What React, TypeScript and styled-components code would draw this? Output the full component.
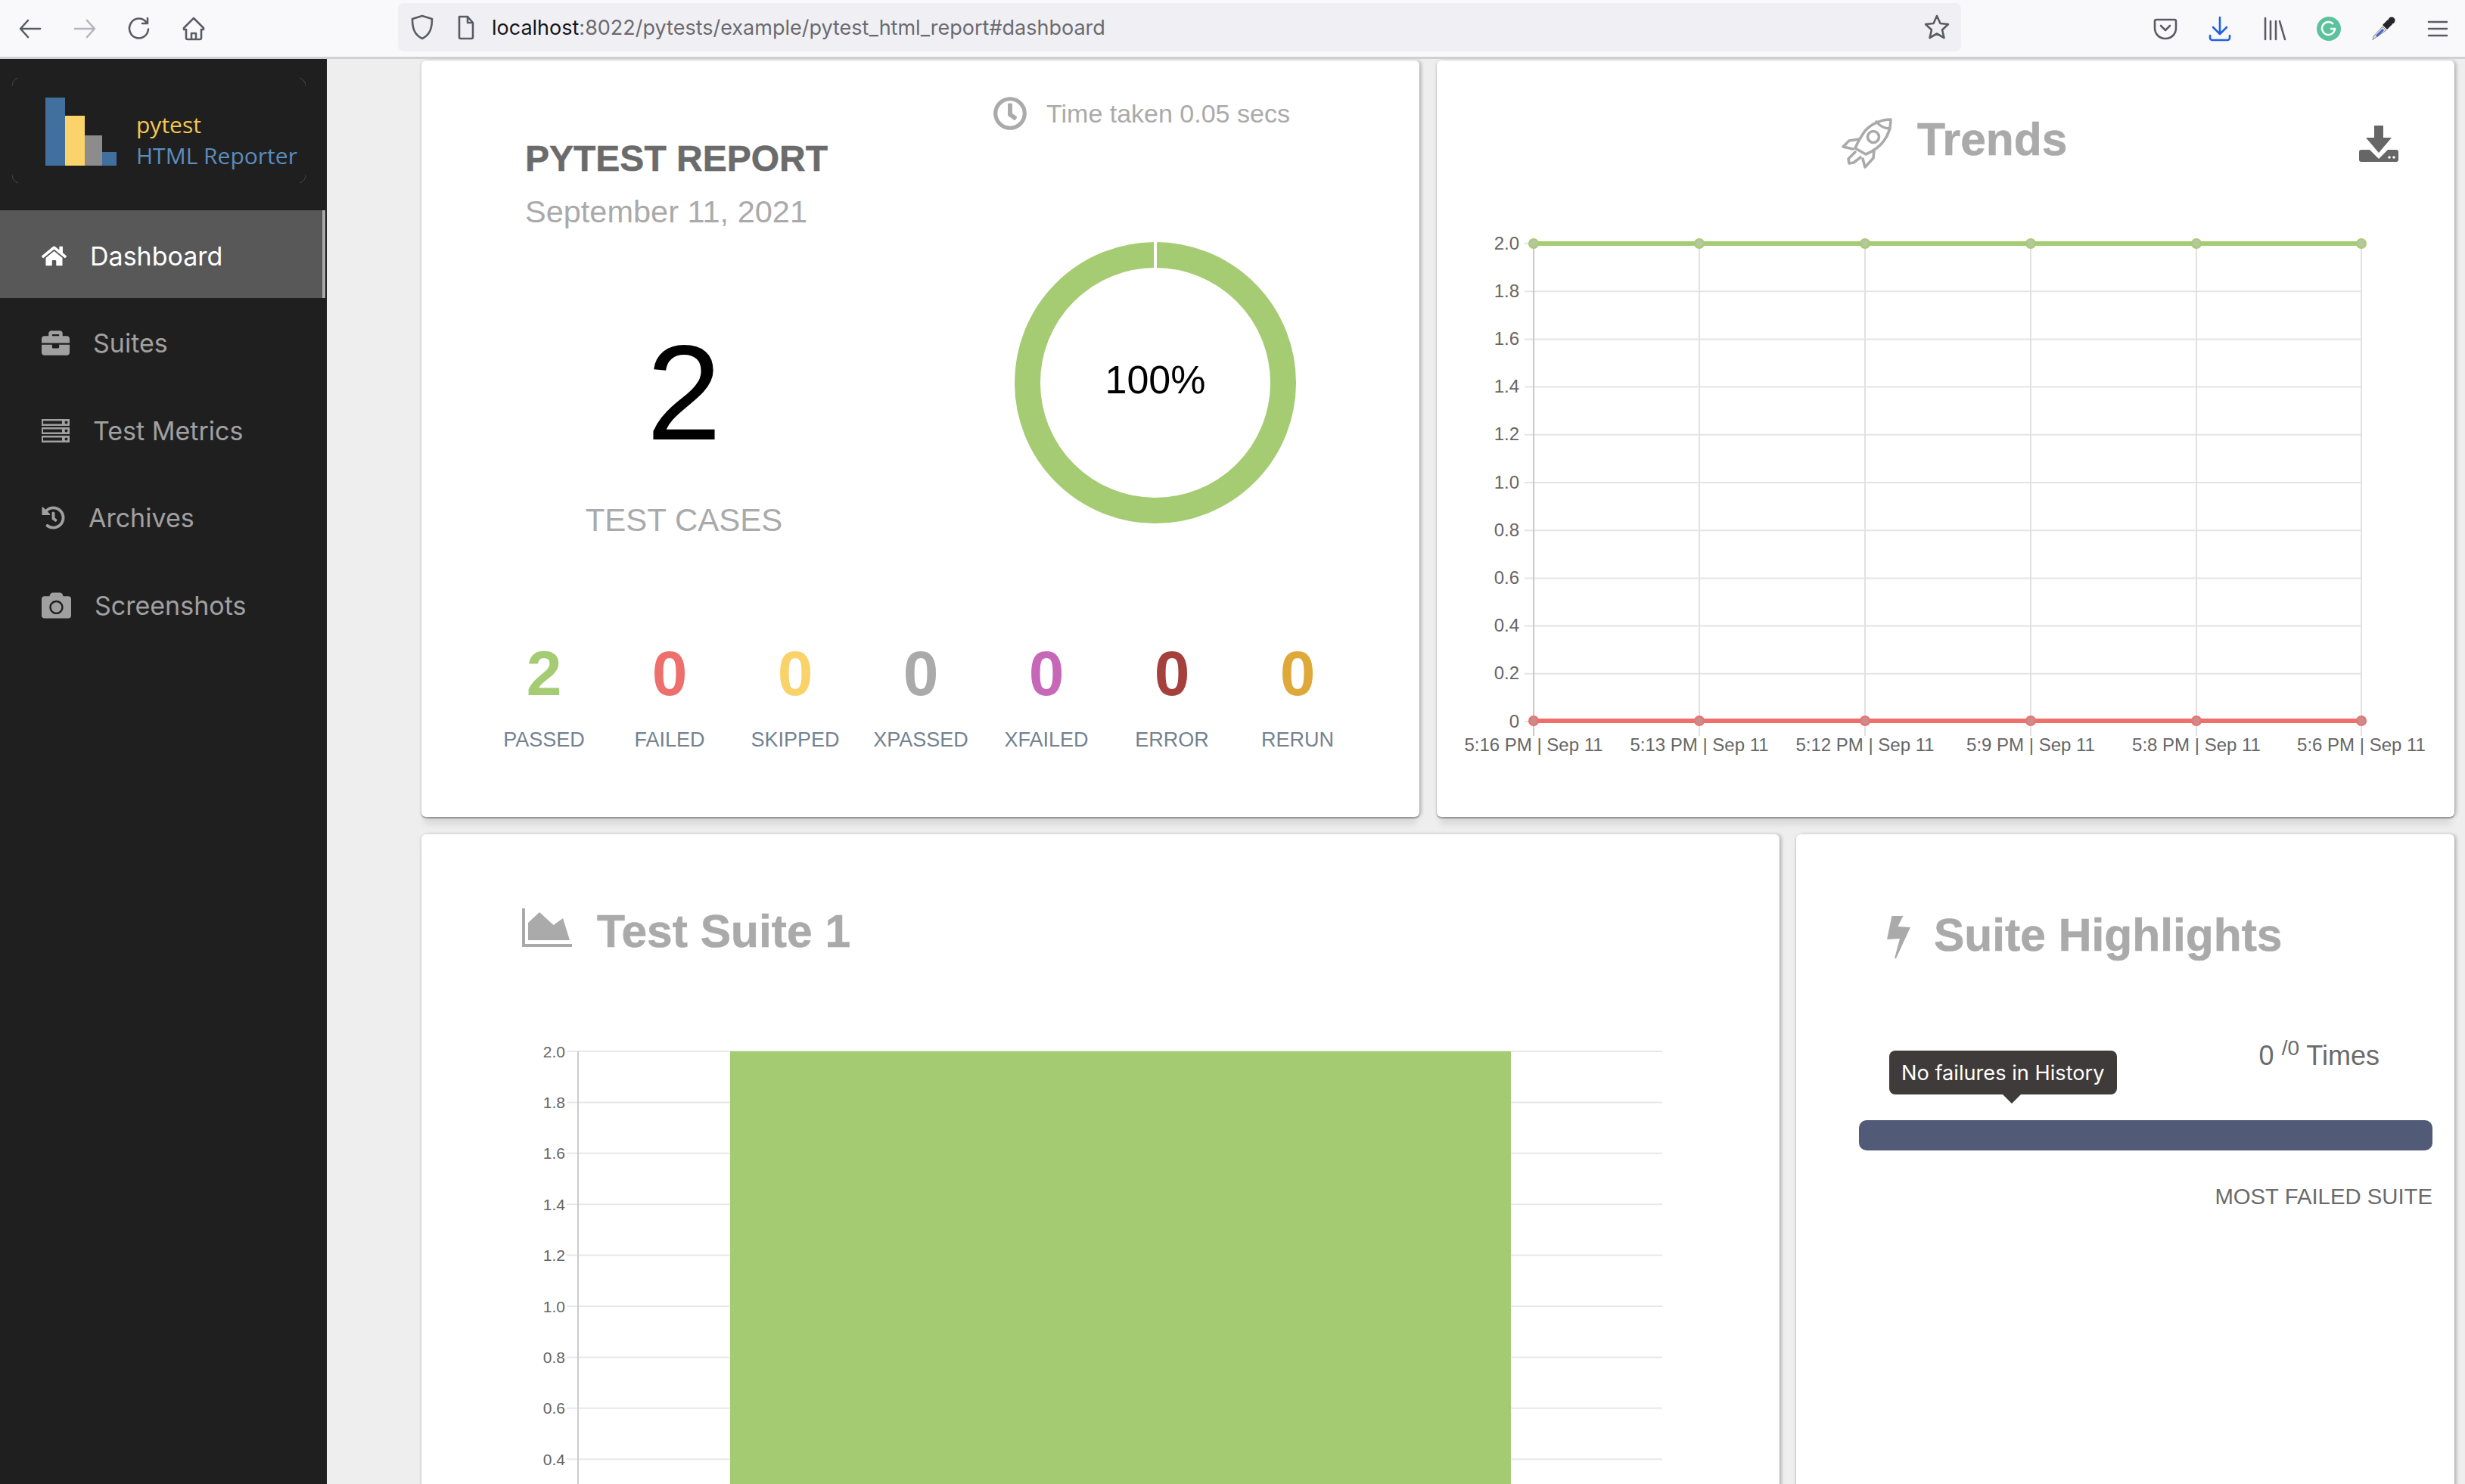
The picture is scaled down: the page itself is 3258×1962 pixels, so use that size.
import styled, {createGlobalStyle} from "styled-components";
import {FaBriefcase, FaCamera, FaHistory, FaHome, FaRegClock} from "react-icons/fa";

const HELVETICA = `"Liberation Sans", Arial, sans-serif`;
const UI_FONT = `Inter, "Liberation Sans", sans-serif`;

const Y_TICKS = ["2.0", "1.8", "1.6", "1.4", "1.2", "1.0", "0.8", "0.6", "0.4", "0.2", "0"];
const BAR_TICKS = ["2.0", "1.8", "1.6", "1.4", "1.2", "1.0", "0.8", "0.6", "0.4"];
const X_TICKS = ["5:16 PM | Sep 11", "5:13 PM | Sep 11", "5:12 PM | Sep 11", "5:9 PM | Sep 11", "5:8 PM | Sep 11", "5:6 PM | Sep 11"];

const STATS = [
  {label: "PASSED", value: 2, color: "#a5cc72"},
  {label: "FAILED", value: 0, color: "#ee706c"},
  {label: "SKIPPED", value: 0, color: "#fad26a"},
  {label: "XPASSED", value: 0, color: "#aaaaaa"},
  {label: "XFAILED", value: 0, color: "#c667b8"},
  {label: "ERROR", value: 0, color: "#a6403d"},
  {label: "RERUN", value: 0, color: "#dfa93a"},
];

const ServerIcon = () => (
  <svg width="37" height="31" viewBox="0 0 37 31" fill="currentColor">
    <path fillRule="evenodd" d="M0 0h37v9H0zM2 2.500v4h25v-4zM0 11h37v9H0zM2 13.500v4h25v-4zM0 22h37v9H0zM2 24.500v4h25v-4z"/>
    <circle cx="32.500" cy="4.500" r="2" fill="#201f20"/>
    <circle cx="32.500" cy="15.500" r="2" fill="#201f20"/>
    <circle cx="32.500" cy="26.500" r="2" fill="#201f20"/>
  </svg>
);

const AreaChartIcon = () => (
  <svg width="66" height="51" viewBox="0 0 66 51" fill="#aaaaaa">
    <path d="M0 0h4v47h62v4H0z"/>
    <path d="M8 19 23 5l18.500 17L54 13l9 29H8z"/>
  </svg>
);

const BoltIcon = () => (
  <svg width="31" height="57" viewBox="0 0 31 57" fill="#aaaaaa">
    <path d="M6.400 0h15L14.400 14 31 15 12 56h-2l7-26-17 1z"/>
  </svg>
);

const RocketIcon = () => (
  <svg width="67" height="67" viewBox="0 0 67 67" fill="none" stroke="#aaaaaa" strokeWidth="3.600" strokeLinejoin="round" strokeLinecap="round">
    <path d="M65 2C52 2 39 8 31 17 24 27 20 35 18 40l14 8c7-3 18-9 24-18 6-8 9-18 9-28z"/>
    <path d="M46 5c4 5 11 9 18 9"/>
    <circle cx="42" cy="25" r="7.500"/>
    <path d="M23 28 10 30l-8 8 13 3M43 42l-1 11-11 12-3-11"/>
    <path d="m18 45-9 9 1 6 6-1 9-7"/>
  </svg>
);

const DownloadIcon = () => (
  <svg width="52" height="48" viewBox="0 0 52 48">
    <rect x="0" y="32" width="52" height="16" rx="3" fill="#666666"/>
    <path d="M8 26h36L26 44z" fill="#ffffff"/>
    <path d="M20 0h12v16h11L26 36 9 16h11z" fill="#666666"/>
    <circle cx="40" cy="42" r="1.800" fill="#ffffff"/>
    <circle cx="46" cy="42" r="1.800" fill="#ffffff"/>
  </svg>
);

const ToolIcon = ({children, color = "#5b5b66", fill = "none"}: {children: React.ReactNode; color?: string; fill?: string}) => (
  <svg width="36" height="36" viewBox="0 0 36 36" fill={fill} stroke={color} strokeWidth="2.600" strokeLinecap="round" strokeLinejoin="round">
    {children}
  </svg>
);

const Logo = () => (
  <svg width="94" height="90" viewBox="0 0 94 90">
    <rect x="0" y="0" width="26" height="90" fill="#41709f"/>
    <rect x="26" y="24" width="26" height="66" fill="#fad46a"/>
    <rect x="52" y="50" width="23" height="40" fill="#8c8c8c"/>
    <rect x="75" y="72" width="19" height="18" fill="#41709f"/>
  </svg>
);

const TrendsChart = () => {
  const xs = [2027, 2246, 2465, 2684, 2903, 3121];
  return (
    <ChartSvg width="1345" height="740" viewBox="1899 270 1345 740">
      {Y_TICKS.map((tick, i) => {
        const y = 322 + i * 63.2;
        return (
          <g key={tick}>
            <line x1="2015" x2="3121" y1={y} y2={y} stroke="#e4e4e4" strokeWidth="2"/>
            <AxisText x="2008" y={y - 1} textAnchor="end" dominantBaseline="central">{tick}</AxisText>
          </g>
        );
      })}
      {xs.map((x, i) => (
        <g key={x}>
          <line x1={x} x2={x} y1="322" y2="973" stroke={i === 0 ? "#c8c8c8" : "#e2e2e2"} strokeWidth="2"/>
          <AxisText x={x} y="984" textAnchor="middle" dominantBaseline="central">{X_TICKS[i]}</AxisText>
        </g>
      ))}
      <line x1="2027" x2="3121" y1="322" y2="322" stroke="#a5cc72" strokeWidth="6"/>
      <line x1="2027" x2="3121" y1="953" y2="953" stroke="#ee706c" strokeWidth="6"/>
      {xs.map((x) => (
        <g key={x}>
          <circle cx={x} cy="322" r="6" fill="#b5c79c" stroke="#a5cc72" strokeWidth="2"/>
          <circle cx={x} cy="953" r="6" fill="#c98b8b" stroke="#ee706c" strokeWidth="2"/>
        </g>
      ))}
    </ChartSvg>
  );
};

const SuiteChart = () => (
  <ChartSvg width="1795" height="640" viewBox="557 1340 1795 640">
    {BAR_TICKS.map((tick, i) => {
      const y = 1392 + i * 67.4;
      return (
        <g key={tick}>
          <line x1="749" x2="2197" y1={y} y2={y} stroke="#e8e8e8" strokeWidth="2"/>
          <BarAxisText x="747" y={y} textAnchor="end" dominantBaseline="central">{tick}</BarAxisText>
        </g>
      );
    })}
    <line x1="764" x2="764" y1="1392" y2="1980" stroke="#cccccc" strokeWidth="2"/>
    <rect x="965" y="1392" width="1032" height="588" fill="#a4cb72"/>
  </ChartSvg>
);

export default function App() {
  return (
    <>
      <GlobalStyle/>
      <Page>
        <Toolbar>
          <NavIcons>
            <ToolSlot><ToolIcon><path d="M31 18H6M15 7 5 18l10 11"/></ToolIcon></ToolSlot>
            <ToolSlot><ToolIcon color="#b4b4ba"><path d="M5 18h25M21 7l10 11-10 11"/></ToolIcon></ToolSlot>
            <ToolSlot><ToolIcon><path d="M27 9a12.500 13 0 1 0 3 9.500M29 4v7h-7"/></ToolIcon></ToolSlot>
            <ToolSlot><ToolIcon><path d="m18 4 13 13v2h-3v11a2 2 0 0 1-2 2H10a2 2 0 0 1-2-2V19H5v-2zM15 32v-8h6v8"/></ToolIcon></ToolSlot>
          </NavIcons>
          <AddressBar>
            <ToolIcon><path d="M18 3 31 7c0 13-3 21-13 26C8 28 5 20 5 7z"/></ToolIcon>
            <ToolIcon><path d="M9 4h11l7 8v19a2 2 0 0 1-2 2H11a2 2 0 0 1-2-2zM20 4v8h7"/></ToolIcon>
            <Url><b>localhost</b>:8022/pytests/example/pytest_html_report#dashboard</Url>
            <StarSlot>
              <ToolIcon><path d="m18 3 4.500 10 10.500 1-8 7.500L27.500 32 18 26.500 8.500 32 11 21.500 3 14l10.500-1z"/></ToolIcon>
            </StarSlot>
          </AddressBar>
          <ToolIcons>
            <ToolSlot><ToolIcon><path d="M6 6h24a2 2 0 0 1 2 2v9c0 8-6 14-14 14S4 25 4 17V8a2 2 0 0 1 2-2zM12 14l6 6 6-6"/></ToolIcon></ToolSlot>
            <ToolSlot><ToolIcon color="#1f62e0"><path d="M18 3v22M9 16l9 9 9-9M5 27v3a3 3 0 0 0 3 3h20a3 3 0 0 0 3-3v-3"/></ToolIcon></ToolSlot>
            <ToolSlot><ToolIcon><path d="M6 4v28M13 8v24M20 8v24M25 8l7 24"/></ToolIcon></ToolSlot>
            <ToolSlot>
              <svg width="36" height="36" viewBox="0 0 36 36">
                <circle cx="18" cy="18" r="16" fill="#5bc29d"/>
                <path d="M24 12a8.500 8.500 0 1 0 2 6h-6" fill="none" stroke="#ffffff" strokeWidth="2.400"/>
              </svg>
            </ToolSlot>
            <ToolSlot>
              <svg width="36" height="36" viewBox="0 0 36 36">
                <path d="M6 31 4 33l1-5L17 15l5 5z" fill="#d9dce2" stroke="#8c8c90" strokeWidth="1"/>
                <path d="m8 27 9-9 2 2-9 9z" fill="#3b66c9"/>
                <path d="m17 13 7-7 6 6-7 7z" fill="#26262a"/>
                <circle cx="29" cy="7" r="4.500" fill="#26262a"/>
              </svg>
            </ToolSlot>
            <ToolSlot><ToolIcon><path d="M6 9h24M6 18h24M6 27h24"/></ToolIcon></ToolSlot>
          </ToolIcons>
        </Toolbar>
        <Body>
          <Sidebar>
            <Brand>
              <BrandFrame width="388" height="141" viewBox="0 0 388 141" fill="none" stroke="#4a4a4a" strokeWidth="1">
                <path d="M0 12A12 12 0 0 1 8 1M380 1a12 12 0 0 1 8 11M388 129a12 12 0 0 1-8 11M8 140a12 12 0 0 1-8-11"/>
              </BrandFrame>
              <Logo/>
              <BrandText>
                <BrandPytest>pytest</BrandPytest>
                <BrandReporter>HTML Reporter</BrandReporter>
              </BrandText>
            </Brand>
            <NavItem $active><FaHome size={33}/>Dashboard</NavItem>
            <NavItem><FaBriefcase size={37}/>Suites</NavItem>
            <NavItem><ServerIcon/>Test Metrics</NavItem>
            <NavItem><FaHistory size={31}/>Archives</NavItem>
            <NavItem><FaCamera size={39}/>Screenshots</NavItem>
          </Sidebar>
          <Main>
            <TopRow>
              <Card>
                <Summary>
                  <SummaryLeft>
                    <ReportTitle>PYTEST REPORT</ReportTitle>
                    <ReportDate>September 11, 2021</ReportDate>
                    <BigCount>2</BigCount>
                    <CountLabel>TEST CASES</CountLabel>
                  </SummaryLeft>
                  <SummaryRight>
                    <TimeTaken><FaRegClock size={44}/>Time taken 0.05 secs</TimeTaken>
                    <Doughnut width="372" height="372" viewBox="0 0 372 372">
                      <circle cx="186" cy="186" r="169" fill="none" stroke="#a5cc72" strokeWidth="34"/>
                      <rect x="184" y="0" width="4" height="36" fill="#ffffff"/>
                      <DoughnutText x="186" y="182" textAnchor="middle" dominantBaseline="central">100%</DoughnutText>
                    </Doughnut>
                  </SummaryRight>
                </Summary>
                <Stats>
                  {STATS.map((stat) => (
                    <Stat key={stat.label}>
                      <StatValue $color={stat.color}>{stat.value}</StatValue>
                      <StatLabel>{stat.label}</StatLabel>
                    </Stat>
                  ))}
                </Stats>
              </Card>
              <Card>
                <TrendsHeader>
                  <RocketIcon/>
                  <CardTitle>Trends</CardTitle>
                  <DownloadSlot><DownloadIcon/></DownloadSlot>
                </TrendsHeader>
                <TrendsChart/>
              </Card>
            </TopRow>
            <BottomRow>
              <Card>
                <SuiteHeader>
                  <AreaChartIcon/>
                  <CardTitle>Test Suite 1</CardTitle>
                </SuiteHeader>
                <SuiteChart/>
              </Card>
              <Card>
                <HighlightsHeader>
                  <BoltIcon/>
                  <CardTitle>Suite Highlights</CardTitle>
                </HighlightsHeader>
                <Highlights>
                  <Tooltip>No failures in History</Tooltip>
                  <Times>0 <sup>/0</sup> Times</Times>
                  <ProgressBar/>
                  <MostFailed>MOST FAILED SUITE</MostFailed>
                </Highlights>
              </Card>
            </BottomRow>
          </Main>
        </Body>
      </Page>
    </>
  );
}

const GlobalStyle = createGlobalStyle`
  html, body {
    margin: 0;
    padding: 0;
    background: #eeeeee;
    overflow: hidden;
  }

  * {
    box-sizing: border-box;
  }
`;

const Page = styled.div`
  width: 3258px;
  height: 1962px;
  display: flex;
  flex-direction: column;
  font-family: ${HELVETICA};
`;

const Toolbar = styled.header`
  height: 78px;
  flex: none;
  display: flex;
  align-items: flex-start;
  padding: 0 0 0 4px;
  background: #f9f9fb;
  border-bottom: 3px solid #d0d0d2;
`;

const NavIcons = styled.div`
  display: flex;
  height: 75px;
  align-items: center;
`;

const ToolIcons = styled(NavIcons)`
  margin-left: auto;
`;

const ToolSlot = styled.div`
  width: 72px;
  display: flex;
  justify-content: center;
`;

const AddressBar = styled.div`
  margin: 4px 0 0 234px;
  width: 2066px;
  height: 64px;
  display: flex;
  align-items: center;
  gap: 22px;
  padding: 0 0 0 14px;
  border-radius: 8px;
  background: #f0f0f4;
`;

const Url = styled.span`
  margin-left: -6px;
  font-family: ${UI_FONT};
  font-size: 27px;
  color: #6a6a70;
  white-space: nowrap;

  b {
    font-weight: 400;
    color: #15141a;
  }
`;

const StarSlot = styled.div`
  margin-left: auto;
  margin-right: 14px;
  display: flex;
`;

const Body = styled.div`
  flex: 1;
  display: flex;
  min-height: 0;
`;

const Sidebar = styled.aside`
  width: 432px;
  flex: none;
  background: #201f20;
`;

const Brand = styled.div`
  position: relative;
  height: 200px;
  display: flex;
  align-items: flex-start;
  gap: 26px;
  padding: 51px 0 0 60px;
`;

const BrandFrame = styled.svg`
  position: absolute;
  left: 16px;
  top: 24px;
`;

const BrandText = styled.div`
  margin-top: 15px;
  font-family: "Open Sans", sans-serif;
  font-size: 30px;
  line-height: 41px;
`;

const BrandPytest = styled.div`
  color: #f5c84f;
`;

const BrandReporter = styled.div`
  color: #5b8dbd;
`;

const NavItem = styled.div<{$active?: boolean}>`
  height: 115.500px;
  display: flex;
  align-items: center;
  gap: 31px;
  padding-left: 55px;
  padding-top: 5px;
  font-family: ${UI_FONT};
  font-size: 34px;
  color: ${({$active}) => ($active ? "#ffffff" : "#a0a0a0")};
  background: ${({$active}) => ($active ? "#585858" : "transparent")};
  border-right: ${({$active}) => ($active ? "4px solid #a8a8a8" : "none")};
  margin-right: ${({$active}) => ($active ? "2px" : "0")};
`;

const Main = styled.main`
  flex: 1;
  min-width: 0;
  height: 1884px;
  overflow: hidden;
  padding: 2px 14px 0 125px;
`;

const TopRow = styled.div`
  display: grid;
  grid-template-columns: 1319px 1345px;
  gap: 23px;
  height: 1000px;
  margin-bottom: 23px;
`;

const BottomRow = styled.div`
  display: grid;
  grid-template-columns: 1795px 870px;
  gap: 22px;
  height: 880px;
`;

const Card = styled.section`
  position: relative;
  background: #ffffff;
  border-radius: 6px;
  box-shadow: 0 2px 2px rgba(0, 0, 0, 0.28), 3px 0 4px rgba(0, 0, 0, 0.2), 0 14px 10px -4px rgba(0, 0, 0, 0.09), -2px 0 3px rgba(0, 0, 0, 0.05);
`;

const Summary = styled.div`
  display: grid;
  grid-template-columns: 647px 372px;
  padding-left: 137px;
`;

const SummaryLeft = styled.div`
  padding-top: 101px;
`;

const ReportTitle = styled.h1`
  margin: 0;
  font-size: 48px;
  line-height: 58px;
  font-weight: 700;
  color: #6b6b6b;
  -webkit-text-stroke: 0.5px #6b6b6b;
`;

const ReportDate = styled.div`
  margin-top: 17px;
  font-size: 41.500px;
  line-height: 48px;
  color: #aaaaaa;
`;

const BigCount = styled.div`
  width: 420px;
  margin-top: 131px;
  font-size: 178px;
  line-height: 170px;
  text-align: center;
  color: #000000;
`;

const CountLabel = styled.div`
  width: 420px;
  margin-top: 59px;
  font-size: 42px;
  line-height: 48px;
  text-align: center;
  color: #aaaaaa;
`;

const SummaryRight = styled.div`
  padding-top: 45px;
`;

const TimeTaken = styled.div`
  height: 50px;
  margin-left: -28px;
  display: flex;
  align-items: center;
  gap: 26px;
  font-size: 34px;
  color: #aaaaaa;
  white-space: nowrap;

  svg {
    stroke: #aaaaaa;
    stroke-width: 12px;
  }
`;

const Doughnut = styled.svg`
  display: block;
  margin-top: 145px;
`;

const DoughnutText = styled.text`
  font-family: ${HELVETICA};
  font-size: 52px;
  fill: #000000;
`;

const Stats = styled.div`
  display: grid;
  grid-template-columns: repeat(7, 166px);
  margin-top: 133px;
  padding-left: 79px;
`;

const Stat = styled.div`
  text-align: center;
`;

const StatValue = styled.div<{$color: string}>`
  font-size: 84px;
  line-height: 90px;
  font-weight: 700;
  color: ${({$color}) => $color};
`;

const StatLabel = styled.div`
  margin-top: 25px;
  font-size: 27px;
  line-height: 36px;
  color: #738290;
`;

const CardTitle = styled.h2`
  margin: 0;
  font-size: 60.500px;
  line-height: 60px;
  font-weight: 700;
  color: #aaaaaa;
  white-space: nowrap;
  -webkit-text-stroke: 0.6px #aaaaaa;
`;

const TrendsHeader = styled.div`
  height: 190px;
  display: flex;
  align-items: flex-start;
  gap: 33px;
  padding: 74px 74px 0 535px;

  > svg:first-child {
    margin-top: 2px;
  }
`;

const DownloadSlot = styled.div`
  margin: 12px 0 0 auto;
`;

const ChartSvg = styled.svg`
  display: block;
`;

const AxisText = styled.text`
  font-family: ${HELVETICA};
  font-size: 24px;
  fill: #666666;
`;

const BarAxisText = styled(AxisText)`
  font-size: 21px;
`;

const SuiteHeader = styled.div`
  height: 235px;
  display: flex;
  align-items: flex-start;
  gap: 33px;
  padding: 98px 0 0 133px;
`;

const HighlightsHeader = styled.div`
  display: flex;
  align-items: flex-start;
  gap: 31px;
  padding: 103px 0 0 120px;

  > svg {
    margin-top: 5px;
  }
`;

const Highlights = styled.div`
  position: relative;
  margin-top: 106px;
  padding: 0 29px 0 83px;
`;

const Tooltip = styled.div`
  position: absolute;
  left: 123px;
  top: 15px;
  height: 58px;
  padding: 0 16px;
  display: flex;
  align-items: center;
  border-radius: 8px;
  background: #3f3b3a;
  color: #ffffff;
  font-family: ${UI_FONT};
  font-size: 27.200px;
  white-space: nowrap;

  &::after {
    content: "";
    position: absolute;
    left: 150px;
    top: 58px;
    border: 12px solid transparent;
    border-top-color: #3f3b3a;
    border-bottom-width: 0;
  }
`;

const Times = styled.div`
  height: 44px;
  margin-right: 70px;
  font-size: 36px;
  line-height: 44px;
  color: #6b6b6b;
  text-align: right;

  sup {
    font-size: 28px;
    line-height: 0;
  }
`;

const ProgressBar = styled.div`
  height: 40px;
  margin-top: 63px;
  border-radius: 10px;
  background: #515a77;
`;

const MostFailed = styled.div`
  margin-top: 41px;
  font-size: 29.300px;
  line-height: 40px;
  color: #6b6b6b;
  text-align: right;
`;
